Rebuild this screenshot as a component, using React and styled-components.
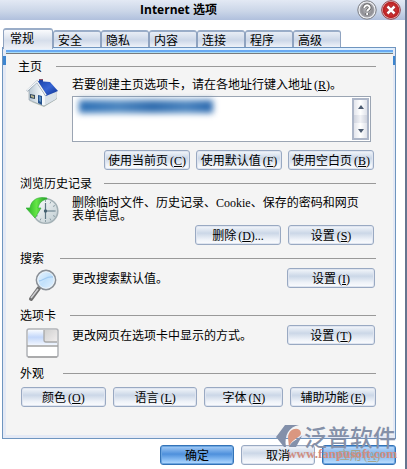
import React from "react";
import styled, { createGlobalStyle, css } from "styled-components";

const GlobalStyle = createGlobalStyle`
  *, *::before, *::after { box-sizing: border-box; }
  body {
    margin: 0;
    background: #fff;
    color: #000;
    font: 12px/12px "Noto Sans CJK SC", sans-serif;
    overflow: hidden;
  }
`;

const Dialog = styled.main`
  min-height: 100vh;
  border-right: 2px solid #66758f;
  background: #fff;
`;

const TitleBar = styled.header`
  display: grid;
  grid-template-columns: 1fr auto;
  align-items: center;
  height: 20px;
  padding: 0 4px 3px 0;
  background: linear-gradient(#e3e9f4, #cbd6e8 55%, #b0c0dd);
`;

const Title = styled.h1`
  margin: 0;
  font: bold 12px/16px "Open Sans", "Noto Sans CJK SC", sans-serif;
  text-align: center;
`;

const TitleButtons = styled.div`
  display: flex;
  gap: 4px;
`;

const RoundButton = styled.button`
  width: 20px;
  height: 20px;
  padding: 0;
  border: 0;
  background: none;
  svg { display: block; }
`;

const TabList = styled.nav`
  display: flex;
  align-items: flex-end;
  height: 27px;
  padding-left: 3px;
`;

const Tab = styled.button`
  width: 48px;
  height: 17px;
  padding: 0 4px;
  border: 1px solid #8fa3c0;
  border-top-width: 2px;
  border-top-color: #9aadc8;
  border-bottom: 0;
  border-radius: 3px 3px 0 0;
  background: linear-gradient(#e8edf5, #ccd7e8 55%, #eef2f9);
  color: #000;
  font: inherit;
  text-align: left;
  ${(p) => p.$active && css`
    position: relative;
    z-index: 1;
    width: 50px;
    height: 21px;
    margin-bottom: -2px;
    padding: 0 6px 3px;
    background: linear-gradient(#fafbfd, #d6deeb 55%, #eef1f7);
  `}
`;

const Panel = styled.section`
  margin: 0 9px 0 2px;
  border: 1px solid #6f95bf;
  padding: 0 2px 3px 3px;
  background:
    linear-gradient(#3d85d0, #3d85d0) 0 8px / 3px 9px no-repeat,
    linear-gradient(#3d85d0, #3d85d0) 100% 8px / 2px 9px no-repeat,
    #e4e9f5;
`;

const PanelBody = styled.div`
  padding: 5px 17px 26px 14px;
  border-top: 6px solid transparent;
  background:
    linear-gradient(#e0f0ff 0 2px, #68a9f2 2px 4px, #a9dcf6 4px 5px, #787a7c 5px 6px) 0 0 / 100% 6px no-repeat border-box,
    #f4f4f4 border-box;
`;

const Group = styled.section`
  height: ${(p) => p.$height}px;
`;

const GroupHeader = styled.div`
  display: flex;
  align-items: center;
  gap: ${(p) => p.$gap || 16}px;
  height: 14px;
  margin-left: ${(p) => (p.$outdent ? -2 : 0)}px;
  &::after {
    content: "";
    flex: 1;
    height: 1px;
    background: #999;
  }
`;

const GroupTitle = styled.h2`
  margin: 0;
  font: inherit;
`;

const GroupContent = styled.div`
  display: grid;
  grid-template-columns: 34px 1fr;
  column-gap: 18px;
  padding-top: ${(p) => p.$top}px;
`;

const IconCell = styled.div`
  padding: ${(p) => p.$top || 0}px 0 0 6px;
  svg { display: block; }
`;

const Stack = styled.div`
  display: flex;
  flex-direction: column;
`;

const Text = styled.p`
  margin: 0;
  padding-right: ${(p) => (p.$inset ? 12 : 0)}px;
`;

const Latin = styled.span`
  font: 12px/12px "Liberation Serif", serif;
`;

const Accelerator = styled(Latin)`
  padding-left: 2px;
`;

const ButtonRow = styled.div`
  display: flex;
  justify-content: flex-end;
  gap: ${(p) => p.$gap || 7}px;
  margin-top: ${(p) => p.$top || 0}px;
  padding-right: 2px;
`;

const SettingRow = styled.div`
  display: flex;
  align-items: center;
  justify-content: space-between;
  height: 20px;
  padding-right: 1px;
`;

const PushButton = styled.button`
  width: ${(p) => p.$width ? `${p.$width}px` : "auto"};
  height: 20px;
  padding: 0;
  border: 1px solid #99a9c2;
  border-radius: 3px;
  box-shadow: inset 0 0 0 1px #dfe5f0;
  background: linear-gradient(#f4f7fb, #cbd7e7 40%, #eef2f8 75%, #fbfcfe);
  color: #000;
  font: inherit;
  white-space: nowrap;
  ${(p) => p.$primary && css`
    border-color: #3373b8;
    box-shadow: inset 0 0 0 1px #6ba5e0;
    background: linear-gradient(#a6cdf7, #4e90dc 45%, #8fc2f6 80%, #b8dcff);
  `}
  &:disabled {
    background: linear-gradient(#c0dcfa, #7fb2ea 45%, #a5cff8 80%, #c4e2ff);
    color: #a5a58e;
  }
`;

const AddressBox = styled.div`
  position: relative;
  display: flex;
  height: 46px;
  margin: 5px 5px 0 0;
  border: 1px solid #9ba5b3;
  background: #fff;
`;

const AddressInput = styled.textarea`
  flex: 1;
  min-width: 0;
  padding: 4px 6px;
  border: 0;
  outline: 0;
  background: transparent;
  resize: none;
  overflow: hidden;
  font: 12px/12px "Liberation Mono", monospace;
`;

const ObscuredAddress = styled.div`
  position: absolute;
  top: 3px;
  left: 6px;
  width: 134px;
  height: 13px;
  background: linear-gradient(90deg, #2c6fb5, #4c86c0 30%, #2f6cae 55%, #4a84bf 80%, #2a68ae);
  filter: blur(3px);
`;

const ScrollBar = styled.div`
  display: flex;
  flex-direction: column;
  justify-content: space-between;
  width: 17px;
  margin: 1px;
  border: 2px solid #adb6c8;
  background: linear-gradient(90deg, #e3e5ec, #fff 50%, #dfe2ea);
`;

const ScrollArrow = styled.button`
  height: 14px;
  padding: 0;
  border: 0;
  background: none;
  svg { display: block; margin: auto; }
`;

const ScrollThumb = styled.div`
  height: 8px;
  background: linear-gradient(90deg, #cfd3de, #f1f2f6, #ced2dd);
`;

const AppearanceRow = styled.div`
  display: grid;
  grid-template-columns: 85fr 85fr 79fr 86fr;
  gap: 7px;
  margin: 7px 0 0 1px;
`;

const Footer = styled.footer`
  position: relative;
  display: flex;
  justify-content: flex-end;
  gap: 7px;
  padding: 6px 9px 4px 0;
`;

const Watermark = styled.div`
  position: absolute;
  right: 8px;
  bottom: 9px;
  width: 121px;
  pointer-events: none;
  svg { position: absolute; left: 0; top: 0; }
`;

const WatermarkName = styled.div`
  padding-left: 28px;
  color: #8490a8;
  font-size: 23px;
  font-weight: 500;
  line-height: 24px;
  white-space: nowrap;
`;

const WatermarkSite = styled.div`
  color: #d08d80;
  font: bold 13px/12px "Liberation Serif", serif;
  text-align: right;
`;

const Key = ({ k, dots }) => (
  <Accelerator>(<u>{k}</u>){dots}</Accelerator>
);

const HelpIcon = () => (
  <svg width="20" height="20" viewBox="0 0 20 20">
    <defs>
      <radialGradient id="help"><stop offset="0" stopColor="#c2c2c6" /><stop offset=".7" stopColor="#8e8e93" /><stop offset="1" stopColor="#aaaab0" /></radialGradient>
    </defs>
    <circle cx="10" cy="10" r="9.2" fill="#eef0f4" stroke="#77797f" />
    <circle cx="10" cy="10" r="7.5" fill="url(#help)" />
    <path d="M7.3 8c0-3.7 5.7-3.4 5.4-.2-.2 1.7-2.5 1.8-2.5 3.7M10.2 13v2" fill="none" stroke="#555" strokeWidth="3.4" />
    <path d="M7.3 8c0-3.7 5.7-3.4 5.4-.2-.2 1.7-2.5 1.8-2.5 3.7M10.2 13v2" fill="none" stroke="#fff" strokeWidth="2" />
  </svg>
);

const CloseIcon = () => (
  <svg width="20" height="20" viewBox="0 0 20 20">
    <defs>
      <radialGradient id="close"><stop offset="0" stopColor="#e0504b" /><stop offset="1" stopColor="#b81c20" /></radialGradient>
    </defs>
    <circle cx="10" cy="10" r="9.3" fill="#ead0d2" stroke="#913c43" />
    <circle cx="10" cy="10" r="8.3" fill="url(#close)" />
    <path d="m6.5 6.5 7 7m0-7-7 7" stroke="#9c1720" strokeWidth="4" />
    <path d="m6.5 6.5 7 7m0-7-7 7" stroke="#fff" strokeWidth="2.5" />
  </svg>
);

const HouseIcon = () => (
  <svg width="33" height="30" viewBox="0 0 33 30">
    <defs>
      <linearGradient id="roof" x2="1" y2="1"><stop stopColor="#1741a8" /><stop offset=".5" stopColor="#3765d4" /><stop offset="1" stopColor="#092d8c" /></linearGradient>
      <linearGradient id="wall" x2="1"><stop stopColor="#b9c8d4" /><stop offset=".5" stopColor="#f8fbfd" /><stop offset="1" stopColor="#c5d0da" /></linearGradient>
    </defs>
    <path d="m3 23 15 6 13-8-2-3-12 8z" fill="#a6b39f" opacity=".7" />
    <path d="M3 12 11 4l9 13 10-3v7l-12 7-15-6z" fill="url(#wall)" stroke="#8997a3" strokeWidth=".6" />
    <path d="M19 17v10l11-6v-7z" fill="#d9e1e8" />
    <path d="M13 1h4v4h-4z" fill="#2341a0" /><path d="M13 1h4v1h-4z" fill="#8d4f66" />
    <path d="m11 3 13 1 8 9-12 5z" fill="url(#roof)" />
    <path d="M1 13 11 3.500l9 14" fill="none" stroke="#8d9dad" strokeWidth="2" />
    <path d="M1 12.500 11 3.500l9 13.500" fill="none" stroke="#f8fafb" strokeWidth="1.200" />
    <path d="m4 16 5 1v4l-5-1z" fill="#33495d" /><path d="m5 17 3 1v2l-3-1z" fill="#b7b48f" />
    <path d="m12 17 4 1v9l-4-2z" fill="#24528d" /><path d="m13 18 2 1v5l-2-1z" fill="#5c8ebf" />
  </svg>
);

const HistoryIcon = () => (
  <svg width="33" height="29" viewBox="0 0 33 29">
    <defs>
      <linearGradient id="clock" x2="1" y2="1"><stop stopColor="#fff" /><stop offset="1" stopColor="#bdcbd0" /></linearGradient>
      <linearGradient id="green" x2="1"><stop stopColor="#24ad24" /><stop offset=".5" stopColor="#65e646" /><stop offset="1" stopColor="#219a27" /></linearGradient>
    </defs>
    <circle cx="19.500" cy="15" r="12.300" fill="url(#clock)" stroke="#a3b0b5" strokeWidth="1.600" />
    <g stroke="#8fa1a9" strokeWidth="1"><path d="M19.500 4v2M19.500 24v2M28 15h2M25 5.500l-1 2M29 9.500l-2 1M29 20.500l-2-1M25 24.500l-1-2M14 24.500l1-2M10 20.500l2-1" /></g>
    <path d="M19.500 7v8h9M19.500 15v8" fill="none" stroke="#5b7582" strokeWidth="1.200" />
    <circle cx="19.500" cy="15" r="1.700" fill="#456170" />
    <path d="M21 2C12 0 5 4 4 12H0l9 10 6-10h-3c1-5 4-8 9-9z" fill="url(#green)" stroke="#38b13c" strokeWidth=".7" />
  </svg>
);

const SearchIcon = () => (
  <svg width="33" height="33" viewBox="0 0 33 33">
    <defs><linearGradient id="lens" x2="1" y2="1"><stop stopColor="#eef7ff" /><stop offset=".5" stopColor="#c2e1fb" /><stop offset="1" stopColor="#e8f4ff" /></linearGradient></defs>
    <path d="m13 19-8 11" stroke="#707070" strokeWidth="4" strokeLinecap="round" />
    <path d="m12 20-7 9" stroke="#d0d0d3" strokeWidth="1.500" />
    <circle cx="20" cy="11" r="9.500" fill="url(#lens)" stroke="#8a9097" strokeWidth="1.800" />
    <circle cx="20" cy="11" r="8.300" fill="none" stroke="#eef5fa" />
    <path d="M13 12c4 0 7-5 14-4" fill="none" stroke="#a2cbf2" strokeWidth="1.300" />
  </svg>
);

const TabsIcon = () => (
  <svg width="33" height="30" viewBox="0 0 33 30">
    <defs>
      <linearGradient id="tabBlue" x2="0" y2="1"><stop stopColor="#f8fbff" /><stop offset=".45" stopColor="#c3d7fa" /><stop offset="1" stopColor="#f7faff" /></linearGradient>
      <linearGradient id="tabGray" x2="1" y2="1"><stop stopColor="#d0d0d0" /><stop offset="1" stopColor="#f1eeee" /></linearGradient>
    </defs>
    <rect x="1" y="1" width="31" height="28" rx="2" fill="#fff" stroke="#b0b2b7" strokeWidth="1.500" />
    <path d="M2 2h16v12h13v4H2z" fill="url(#tabBlue)" />
    <path d="M18 2h13v12H18z" fill="url(#tabGray)" />
    <path d="M18 2v10q0 2 2 2h11" fill="none" stroke="#a8a8a8" strokeWidth="1.300" />
    <path d="M1 18h31M2 29h29" stroke="#a3a3a3" strokeWidth="1.300" />
  </svg>
);

const tabs = ["常规", "安全", "隐私", "内容", "连接", "程序", "高级"];

export default function App() {
  return (
    <Dialog>
      <GlobalStyle />
      <TitleBar>
        <Title>Internet 选项</Title>
        <TitleButtons>
          <RoundButton aria-label="帮助"><HelpIcon /></RoundButton>
          <RoundButton aria-label="关闭"><CloseIcon /></RoundButton>
        </TitleButtons>
      </TitleBar>
      <TabList>
        {tabs.map((name, i) => <Tab key={name} $active={i === 0}>{name}</Tab>)}
      </TabList>
      <Panel>
        <PanelBody>
          <Group $height={117}>
            <GroupHeader $gap={14} $outdent><GroupTitle>主页</GroupTitle></GroupHeader>
            <GroupContent $top={5}>
              <IconCell><HouseIcon /></IconCell>
              <Stack>
                <Text as="label" htmlFor="address">若要创建主页选项卡，请在各地址行键入地址<Key k="R" />。</Text>
                <AddressBox>
                  <ObscuredAddress />
                  <AddressInput id="address" />
                  <ScrollBar>
                    <ScrollArrow aria-label="向上"><svg width="6" height="4"><path d="M0 4 3 0l3 4z" fill="#4b5a70" /></svg></ScrollArrow>
                    <ScrollThumb />
                    <ScrollArrow aria-label="向下"><svg width="6" height="4"><path d="m0 0 3 4 3-4z" fill="#4b5a70" /></svg></ScrollArrow>
                  </ScrollBar>
                </AddressBox>
              </Stack>
            </GroupContent>
            <ButtonRow $top={8} $gap={6}>
              <PushButton $width={86}>使用当前页<Key k="C" /></PushButton>
              <PushButton $width={86}>使用默认值<Key k="F" /></PushButton>
              <PushButton $width={86}>使用空白页<Key k="B" /></PushButton>
            </ButtonRow>
          </Group>
          <Group $height={75}>
            <GroupHeader $gap={12}><GroupTitle>浏览历史记录</GroupTitle></GroupHeader>
            <GroupContent $top={6}>
              <IconCell><HistoryIcon /></IconCell>
              <Text $inset>删除临时文件、历史记录、<Latin>Cookie</Latin>、保存的密码和网页表单信息。</Text>
            </GroupContent>
            <ButtonRow>
              <PushButton $width={86}>删除<Key k="D" dots="..." /></PushButton>
              <PushButton $width={86}>设置<Key k="S" /></PushButton>
            </ButtonRow>
          </Group>
          <Group $height={57}>
            <GroupHeader><GroupTitle>搜索</GroupTitle></GroupHeader>
            <GroupContent $top={3}>
              <IconCell $top={1}><SearchIcon /></IconCell>
              <SettingRow>
                <Text>更改搜索默认值。</Text>
                <PushButton $width={88}>设置<Key k="I" /></PushButton>
              </SettingRow>
            </GroupContent>
          </Group>
          <Group $height={58}>
            <GroupHeader $gap={14}><GroupTitle>选项卡</GroupTitle></GroupHeader>
            <GroupContent $top={3}>
              <IconCell $top={3}><TabsIcon /></IconCell>
              <SettingRow>
                <Text>更改网页在选项卡中显示的方式。</Text>
                <PushButton $width={88}>设置<Key k="T" /></PushButton>
              </SettingRow>
            </GroupContent>
          </Group>
          <Group $height={43}>
            <GroupHeader $gap={19}><GroupTitle>外观</GroupTitle></GroupHeader>
            <AppearanceRow>
              <PushButton>颜色<Key k="O" /></PushButton>
              <PushButton>语言<Key k="L" /></PushButton>
              <PushButton>字体<Key k="N" /></PushButton>
              <PushButton>辅助功能<Key k="E" /></PushButton>
            </AppearanceRow>
          </Group>
        </PanelBody>
      </Panel>
      <Footer>
        <PushButton $width={74} $primary>确定</PushButton>
        <PushButton $width={74}>取消</PushButton>
        <PushButton $width={74} $primary disabled>应用<Key k="A" /></PushButton>
        <Watermark>
          <svg width="28" height="25" viewBox="0 0 28 25">
            <path d="M9 1h14C13 3 8 11 10 23H8L0 13z" fill="#8390aa" />
            <path d="M12 14C12 4 24 2 25 9c0 5-9 5-12 14z" fill="#da9780" />
            <path d="M13 23c2-6 9-8 13-11l-6 11z" fill="#8390aa" />
          </svg>
          <WatermarkName>泛普软件</WatermarkName>
          <WatermarkSite>www.fanpusoft.com</WatermarkSite>
        </Watermark>
      </Footer>
    </Dialog>
  );
}
